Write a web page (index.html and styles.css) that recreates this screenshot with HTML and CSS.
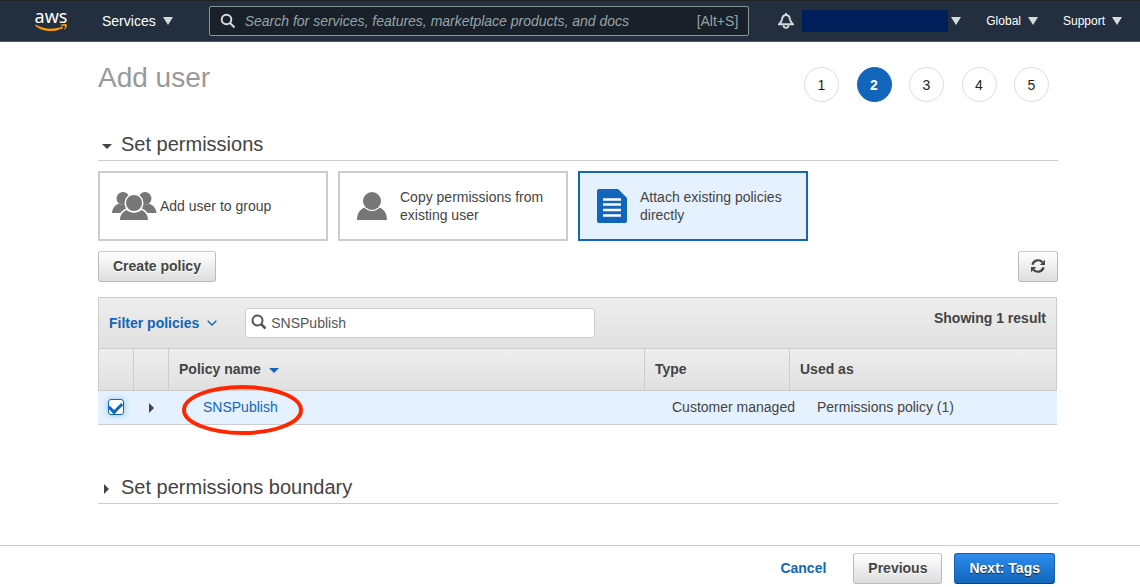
FILE: index.html
```html
<!DOCTYPE html>
<html lang="en">
<head>
    <meta charset="UTF-8">
    <meta name="viewport" content="width=device-width, initial-scale=1.0">
    <title>IAM - Add user</title>
    <link rel="stylesheet" href="styles.css">
</head>
<body>
    <header class="navbar">
        <a class="logo" href="#" aria-label="aws home">
            <span class="logo-text">aws</span>
            <svg class="logo-smile" width="34" height="8" viewBox="0 0 34 8" fill="#f90">
                <path d="M1.500 .6C9 5.400 20 6 28.500 2.600L29.300 3.900C21 8.600 8 8.200 1 1.500Z"/>
                <path d="M26.500 1C28.500 0 31 -.2 32.800 .4C33.200 2 32.200 4.400 30.600 5.800L30.200 5.400C30.800 4.200 31.200 3 30.900 2.100C30.200 1.600 28.400 1.600 26.600 1.800Z"/>
            </svg>
        </a>
        <button class="nav-btn services">Services <span class="caret"></span></button>
        <div class="nav-search">
            <svg width="16" height="16" viewBox="0 0 16 16" fill="none" stroke="#d5dbdb" stroke-width="2">
                <circle cx="6.500" cy="6.500" r="4.800"/>
                <path d="M10 10L14.500 14.500"/>
            </svg>
            <input type="text" aria-label="Search" placeholder="Search for services, features, marketplace products, and docs">
            <span class="shortcut">[Alt+S]</span>
        </div>
        <button class="nav-btn bell" aria-label="Notifications">
            <svg width="16" height="16" viewBox="0 0 16 16" fill="none" stroke="#d5dbdb" stroke-width="1.900">
                <path d="M8 0V2M1.200 11.200H14.800C13 9.500 12.400 8.500 12 6.500C11.600 3.500 10 2 8 2S4.400 3.500 4 6.500C3.600 8.500 3 9.500 1.200 11.200ZM5.500 12.500C5.800 15.600 10.200 15.600 10.500 12.500"/>
            </svg>
        </button>
        <button class="nav-btn small account" aria-label="Account"><span class="account-name"></span><span class="caret"></span></button>
        <button class="nav-btn small">Global <span class="caret"></span></button>
        <button class="nav-btn small">Support <span class="caret"></span></button>
    </header>

    <main>
        <div class="title-row">
            <h1>Add user</h1>
            <ol class="steps">
                <li>1</li>
                <li class="active">2</li>
                <li>3</li>
                <li>4</li>
                <li>5</li>
            </ol>
        </div>

        <h2 class="section-title"><button><span class="arrow down"></span>Set permissions</button></h2>

        <div class="tiles">
            <button class="tile">
                <svg width="44" height="30" viewBox="-2 0 44 30" fill="#777">
                    <circle cx="11" cy="7.500" r="6.500"/>
                    <circle cx="33" cy="7.500" r="6.500"/>
                    <path d="M0 22C.5 17 3 14 7 12.500C10 14.500 14 14.500 17 12.500L20 22ZM24 22L27 12.500C30 14.500 34 14.500 37 12.500C41 14 44 17 44.500 22Z"/>
                    <g stroke="#fff" stroke-width="3" paint-order="stroke">
                        <path d="M8 29C8 24 11 20.500 14.500 19C19 22.500 25 22.500 29.500 19C33 20.500 36 24 36 29Z"/>
                        <circle cx="22" cy="12" r="8"/>
                    </g>
                </svg>
                <span>Add user to group</span>
            </button>
            <button class="tile">
                <svg width="30" height="30" viewBox="0 0 30 30" fill="#777">
                    <path d="M0 29C0 22 3 18.500 7.500 16.500C11.500 21 18.500 21 22.500 16.500C27 18.500 30 22 30 29Z"/>
                    <circle cx="15" cy="10" r="9" stroke="#fff" stroke-width="2" paint-order="stroke"/>
                </svg>
                <span>Copy permissions from existing user</span>
            </button>
            <button class="tile selected">
                <svg width="30" height="34" viewBox="0 0 30 34">
                    <path d="M2 0H21L30 9V32Q30 34 28 34H2Q0 34 0 32V2Q0 0 2 0Z" fill="#1166bb"/>
                    <path d="M6 10.500H24M6 15.500H24M6 21H24M6 26.500H24" stroke="#fff" stroke-width="2.500"/>
                </svg>
                <span>Attach existing policies directly</span>
            </button>
        </div>

        <div class="toolbar">
            <button class="btn">Create policy</button>
            <button class="btn refresh" aria-label="Refresh">
                <svg width="14" height="14" viewBox="0 0 14 14" fill="none" stroke="#444" stroke-width="2.200">
                    <path d="M1.500 5.800C2.500 .8 8.500 0 11.500 3.200"/>
                    <path d="M12.500 8.200C11.500 13.200 5.500 14 2.500 10.800"/>
                    <path d="M14 .8V6H8.800ZM0 13.200V8H5.200Z" fill="#444" stroke="none"/>
                </svg>
            </button>
        </div>

        <div class="filter-bar">
            <button class="filter-btn">Filter policies
                <svg width="10" height="6" viewBox="0 0 10 6" fill="none" stroke="#1166bb" stroke-width="1.400"><path d="M.7 .7L5 5L9.300 .7"/></svg>
            </button>
            <div class="filter-search">
                <svg width="16" height="16" viewBox="0 0 16 16" fill="none" stroke="#555" stroke-width="2">
                    <circle cx="6.500" cy="6.500" r="5"/>
                    <path d="M10 10L14.500 14.500" stroke-width="2.500"/>
                </svg>
                <input type="text" aria-label="Filter by name" value="SNSPublish">
            </div>
            <span class="count">Showing 1 result</span>
        </div>
        <table class="policies">
            <colgroup>
                <col class="col-icon">
                <col class="col-icon">
                <col>
                <col class="col-type">
                <col class="col-used">
            </colgroup>
            <thead>
                <tr>
                    <th></th>
                    <th></th>
                    <th>Policy name <span class="sort"></span></th>
                    <th>Type</th>
                    <th>Used as</th>
                </tr>
            </thead>
            <tbody>
                <tr>
                    <td class="icon-cell"><input type="checkbox" aria-label="Select SNSPublish" checked></td>
                    <td class="icon-cell"><button class="expand" aria-label="Expand"><span class="arrow right"></span></button></td>
                    <td class="name-cell">
                        <a href="#">SNSPublish<svg class="highlight" width="124" height="52" viewBox="0 0 124 52"><ellipse cx="61.500" cy="26" rx="58.500" ry="23" fill="none" stroke="#ff2600" stroke-width="4"/></svg></a>
                    </td>
                    <td>Customer managed</td>
                    <td>Permissions policy (1)</td>
                </tr>
            </tbody>
        </table>

        <h2 class="section-title boundary"><button><span class="arrow right"></span>Set permissions boundary</button></h2>
    </main>

    <footer>
        <a href="#">Cancel</a>
        <button class="btn">Previous</button>
        <button class="btn primary">Next: Tags</button>
    </footer>
</body>
</html>
```

FILE: styles.css
```css
* {
    box-sizing: border-box;
}
body {
    margin: 0;
    min-height: 100vh;
    display: flex;
    flex-direction: column;
    font-family: "Liberation Sans", Arial, sans-serif;
    font-size: 14px;
    line-height: 18px;
    color: #444;
    background-color: #fff;
}
button, input {
    font: inherit;
    color: inherit;
}
button {
    padding: 0;
    border: none;
    background: none;
    cursor: pointer;
}
a {
    color: #1166bb;
    text-decoration: none;
}
svg {
    flex: none;
}

/* top navigation */
.navbar {
    display: flex;
    align-items: center;
    height: 42px;
    padding: 0 18px 0 34px;
    background-color: #232f3e;
    border-top: 1px solid #222;
    border-bottom: 1px solid #545b64;
    color: #fff;
}
.logo {
    display: flex;
    flex-direction: column;
    align-items: center;
    gap: 2px;
    width: 34px;
    color: #fff;
}
.logo-text {
    font-family: "Noto Sans", sans-serif;
    font-size: 18px;
    line-height: 12px;
}
.nav-btn {
    display: flex;
    align-items: center;
    gap: 7px;
    margin-left: 25px;
    white-space: nowrap;
}
.nav-btn.small {
    font-size: 12px;
}
.nav-btn.services {
    margin-left: 34px;
}
.nav-btn.bell {
    margin-left: 29px;
}
.nav-btn.account {
    gap: 3px;
    margin-left: 8px;
}
.account-name {
    width: 146px;
    height: 22px;
    background-color: #001e5a;
}
.caret {
    border: 5px solid transparent;
    border-top: 8px solid #d5dbdb;
    border-bottom: 0;
}
.nav-search {
    flex: 1;
    display: flex;
    align-items: center;
    gap: 9px;
    height: 30px;
    margin-left: 36px;
    padding: 0 10px;
    background-color: #1a202a;
    border: 1px solid #879596;
    border-radius: 2px;
}
.nav-search input {
    flex: 1;
    min-width: 0;
    padding: 0;
    border: none;
    outline: none;
    background: none;
}
.nav-search input::placeholder {
    color: #95a5a6;
    font-style: italic;
    opacity: 1;
}
.shortcut {
    color: #95a5a6;
}

/* page content */
main {
    padding: 25px 82px 40px 98px;
}
.title-row {
    display: flex;
    justify-content: space-between;
    padding-right: 9px;
}
h1 {
    margin: 0;
    padding-top: 4px;
    font-size: 28px;
    font-weight: normal;
    line-height: 14px;
    color: #999;
}
.steps {
    display: flex;
    justify-content: space-between;
    width: 245px;
    margin: 0;
    padding: 0;
    list-style: none;
}
.steps li {
    width: 35px;
    height: 35px;
    border: 1px solid #ddd;
    border-radius: 50%;
    line-height: 34px;
    text-align: center;
    color: #222;
}
.steps li.active {
    background-color: #1166bb;
    border-color: #1166bb;
    color: #fff;
    font-weight: bold;
}
.section-title {
    margin: 30px 0 10px;
    padding-bottom: 4px;
    border-bottom: 1px solid #ccc;
    font-size: 20px;
    font-weight: normal;
    line-height: 24px;
}
.section-title button {
    display: flex;
    align-items: center;
}
.section-title .arrow {
    margin: 4px 9px 0 4px;
}
.section-title.boundary {
    margin: 50px 0 0;
}
.section-title.boundary .arrow {
    margin: 4px 12px 0 6px;
}
.arrow.down {
    border: 5px solid transparent;
    border-top-color: #444;
    border-bottom: 0;
}
.arrow.right {
    border: 5px solid transparent;
    border-left-color: #444;
    border-right: 0;
}

.tiles {
    display: flex;
    gap: 10px;
}
.tile {
    display: flex;
    align-items: center;
    width: 230px;
    height: 70px;
    padding: 0 12px 0 4px;
    border: 2px solid #ccc;
    text-align: left;
}
.tile svg {
    width: 56px;
}
.tile.selected {
    border-color: #1166bb;
    background-color: #e5f1fe;
}

.toolbar {
    display: flex;
    justify-content: space-between;
    margin: 10px 0 15px;
}
.btn {
    height: 31px;
    padding: 0 14px 2px;
    border: 1px solid #bbb;
    border-top-color: #ccc;
    border-radius: 3px;
    background: linear-gradient(#fff, #ddd);
    font-weight: bold;
    text-shadow: 0 1px 0 #fff;
}
.btn.refresh {
    display: flex;
    align-items: center;
    justify-content: center;
    width: 40px;
}
.btn.primary {
    border-color: #1a5fa8 #1a5fa8 #0c457f;
    background: linear-gradient(#2e8cee, #1166bb);
    color: #fff;
    text-shadow: 0 1px 1px #222;
}

/* policy list */
.filter-bar {
    display: flex;
    align-items: center;
    height: 51px;
    margin-right: 1px;
    padding: 0 10px;
    border: 1px solid #ccc;
    border-bottom: 0;
    background: linear-gradient(#eee, #e0e0e0);
}
.filter-btn {
    display: flex;
    align-items: center;
    gap: 8px;
    color: #1166bb;
    font-weight: bold;
}
.filter-search {
    display: flex;
    align-items: center;
    gap: 4px;
    width: 350px;
    height: 30px;
    margin-left: 28px;
    padding: 0 5px 2px;
    border: 1px solid #ccc;
    border-radius: 3px;
    background-color: #fff;
}
.filter-search input {
    flex: 1;
    padding: 2px 0 0;
    border: none;
    outline: none;
    color: #555;
}
.count {
    align-self: flex-start;
    margin: 11px 0 0 auto;
    font-weight: bold;
}
.policies {
    width: calc(100% - 1px);
    table-layout: fixed;
    border-collapse: separate;
    border-spacing: 0;
}
.col-icon {
    width: 35px;
}
.col-type {
    width: 145px;
}
.col-used {
    width: 268px;
}
.policies th {
    height: 43px;
    padding: 0 10px 2px;
    border: 1px solid #ccc;
    border-right: 0;
    background: linear-gradient(#eee, #e0e0e0);
    text-align: left;
}
.policies th:last-child {
    border-right: 1px solid #ccc;
}
.sort {
    display: inline-block;
    margin-left: 4px;
    border: 5px solid transparent;
    border-top-color: #1166bb;
    border-bottom: 0;
    vertical-align: 1px;
}
.policies td {
    height: 34px;
    padding: 0 0 2px 28px;
    border-bottom: 1px solid #ccc;
    background-color: #e5f1fe;
    white-space: nowrap;
}
.policies td.icon-cell {
    padding: 0;
    text-align: center;
}
.policies td.name-cell {
    padding-left: 35px;
}
.icon-cell input {
    appearance: none;
    display: flex;
    justify-content: center;
    width: 16px;
    height: 16px;
    margin: 0 auto 2px;
    border: 1px solid #1166bb;
    border-radius: 3px;
    background-color: #fff;
    box-shadow: 0 0 6px #8fc2f5;
}
.icon-cell input:checked::before {
    content: "";
    width: 10px;
    height: 6px;
    margin-top: 2px;
    border: solid #1166bb;
    border-width: 0 0 3px 3px;
    transform: rotate(-45deg);
}
.expand {
    display: block;
    margin: 0 auto;
    padding-left: 2px;
}
.expand .arrow {
    display: block;
}
.name-cell a {
    position: relative;
}
/* ring drawn over the policy link */
.highlight {
    position: absolute;
    left: -22px;
    top: -15px;
    pointer-events: none;
}

footer {
    display: flex;
    align-items: center;
    justify-content: flex-end;
    margin-top: auto;
    padding: 7px 85px 3px;
    border-top: 1px solid #ccc;
}
footer a {
    margin-right: 27px;
    padding-bottom: 2px;
    font-weight: bold;
}
footer .primary {
    margin-left: 12px;
}
```
